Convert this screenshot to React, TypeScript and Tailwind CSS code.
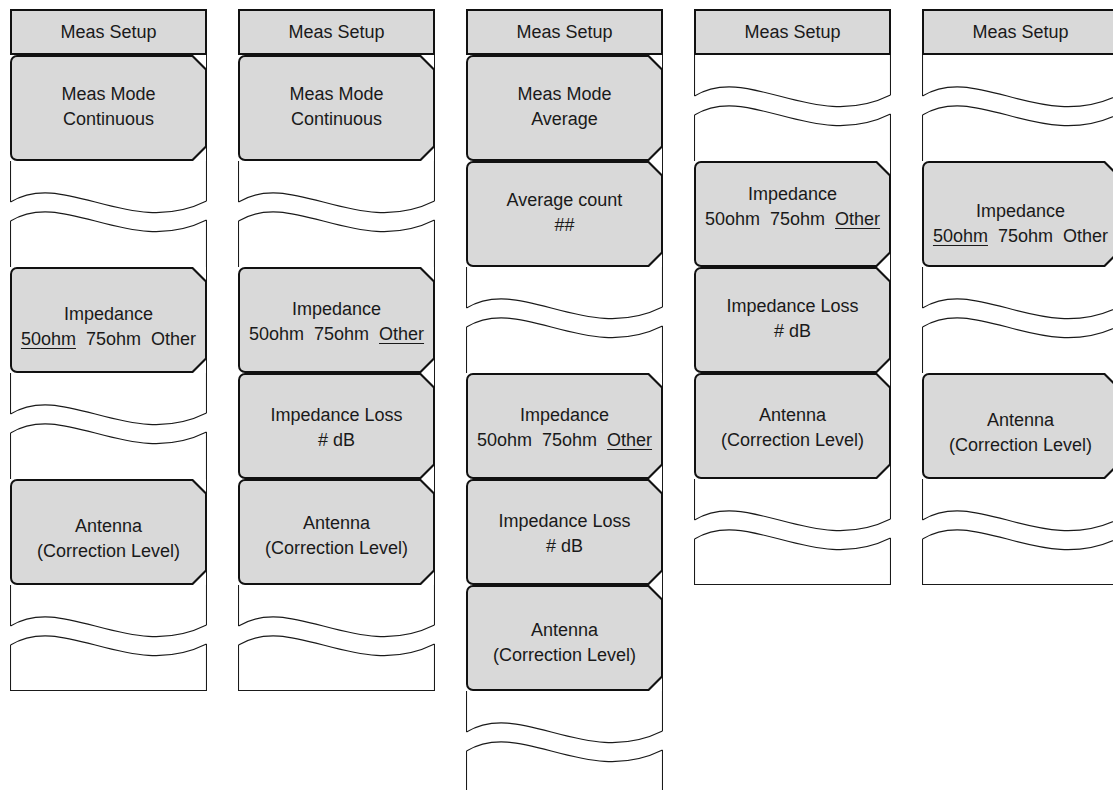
import React from 'react';

type Item =
  | { kind: 'btn'; l1: string; l2: React.ReactNode; pt: number }
  | { kind: 'wave' };

const u = (s: string) => <span className="underline underline-offset-[3px]">{s}</span>;

const imp50 = <>{u('50ohm')}{'  75ohm  Other'}</>;
const impOther = <>{'50ohm  75ohm  '}{u('Other')}</>;

const columns: Item[][] = [
  [
    { kind: 'btn', l1: 'Meas Mode', l2: 'Continuous', pt: 27 },
    { kind: 'wave' },
    { kind: 'btn', l1: 'Impedance', l2: imp50, pt: 35 },
    { kind: 'wave' },
    { kind: 'btn', l1: 'Antenna', l2: '(Correction Level)', pt: 35 },
    { kind: 'wave' },
  ],
  [
    { kind: 'btn', l1: 'Meas Mode', l2: 'Continuous', pt: 27 },
    { kind: 'wave' },
    { kind: 'btn', l1: 'Impedance', l2: impOther, pt: 30 },
    { kind: 'btn', l1: 'Impedance Loss', l2: '# dB', pt: 30 },
    { kind: 'btn', l1: 'Antenna', l2: '(Correction Level)', pt: 32 },
    { kind: 'wave' },
  ],
  [
    { kind: 'btn', l1: 'Meas Mode', l2: 'Average', pt: 27 },
    { kind: 'btn', l1: 'Average count', l2: '##', pt: 27 },
    { kind: 'wave' },
    { kind: 'btn', l1: 'Impedance', l2: impOther, pt: 30 },
    { kind: 'btn', l1: 'Impedance Loss', l2: '# dB', pt: 30 },
    { kind: 'btn', l1: 'Antenna', l2: '(Correction Level)', pt: 33 },
    { kind: 'wave' },
  ],
  [
    { kind: 'wave' },
    { kind: 'btn', l1: 'Impedance', l2: impOther, pt: 21 },
    { kind: 'btn', l1: 'Impedance Loss', l2: '# dB', pt: 27 },
    { kind: 'btn', l1: 'Antenna', l2: '(Correction Level)', pt: 30 },
    { kind: 'wave' },
  ],
  [
    { kind: 'wave' },
    { kind: 'btn', l1: 'Impedance', l2: imp50, pt: 38 },
    { kind: 'wave' },
    { kind: 'btn', l1: 'Antenna', l2: '(Correction Level)', pt: 35 },
    { kind: 'wave' },
  ],
];

// break marker: two wavy cuts across the column
const WaveSlot = ({ last }: { last: boolean }) => (
  <svg width="197" height="106" viewBox="0 0 197 106" className="block shrink-0">
    <g fill="none" stroke="#1a1a1a" strokeWidth="1.1">
      <path d="M0.5 0 V41 M196.5 0 V40" />
      <path d="M0.5 41 C55 8 120 78 196.5 40" />
      <path d="M0.5 60 C55 27 120 97 196.5 59" />
      <path d={last ? 'M0.5 60 V105.5 H196.5 V59' : 'M0.5 60 V106 M196.5 59 V106'} />
    </g>
  </svg>
);

const Button = ({ l1, l2, pt }: { l1: string; l2: React.ReactNode; pt: number }) => (
  <div className="relative h-[106px] shrink-0 bg-[linear-gradient(to_left,#1a1a1a_1px,transparent_1px)]">
    <div className="h-full rounded-l-[7px] bg-[#111] p-[2px] [clip-path:polygon(0_0,calc(100%_-_14px)_0,100%_14px,100%_calc(100%_-_14px),calc(100%_-_14px)_100%,0_100%)]">
      <div
        className="h-full rounded-l-[5px] bg-[#d9d9d9] text-center text-[18px] leading-[25px] text-[#1a1a1a] whitespace-pre [clip-path:polygon(0_0,calc(100%_-_13px)_0,100%_13px,100%_calc(100%_-_13px),calc(100%_-_13px)_100%,0_100%)]"
        style={{ paddingTop: pt - 2 }}
      >
        <div>{l1}</div>
        <div>{l2}</div>
      </div>
    </div>
  </div>
);

const Column = ({ items }: { items: Item[] }) => (
  <div className="flex w-[197px] shrink-0 flex-col">
    <div className="flex h-[46px] items-center justify-center border-2 border-[#111] bg-[#d9d9d9] text-[18px] text-[#1a1a1a]">
      Meas Setup
    </div>
    {items.map((it, i) =>
      it.kind === 'btn' ? (
        <Button key={i} l1={it.l1} l2={it.l2} pt={it.pt} />
      ) : (
        <WaveSlot key={i} last={i === items.length - 1} />
      )
    )}
  </div>
);

export default function App() {
  return (
    <div className="h-[790px] w-[1113px] overflow-hidden bg-white font-['Liberation_Sans',Arial,sans-serif]">
      <div className="flex items-start gap-[31px] pl-[10px] pt-[9px]">
        {columns.map((c, i) => (
          <Column key={i} items={c} />
        ))}
      </div>
    </div>
  );
}
